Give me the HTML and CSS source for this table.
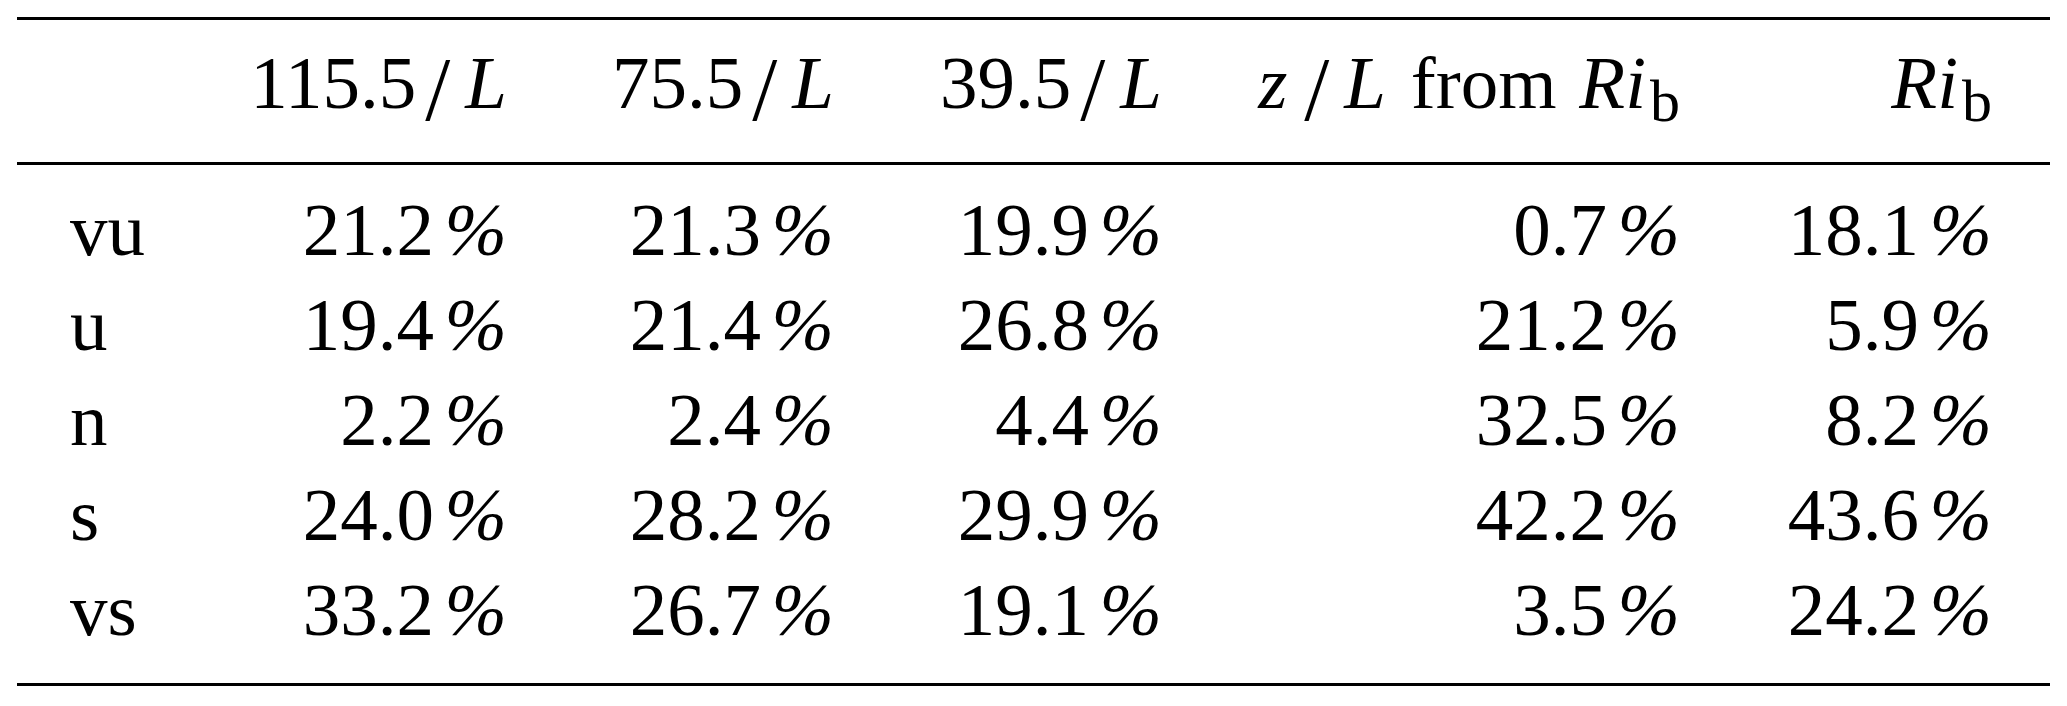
FILE: index.html
```html
<!DOCTYPE html>
<html lang="en">
<head>
<meta charset="utf-8">
<title>Stability classes</title>
<link rel="stylesheet" href="styles.css">
</head>
<body>
<table class="tbl">
  <colgroup>
    <col class="c-stub">
    <col class="c1">
    <col class="c2">
    <col class="c3">
    <col class="c4">
    <col class="c5">
  </colgroup>
  <thead>
    <tr>
      <th class="stub"></th>
      <th>115.5<span class="sl">/</span><i class="m">L</i></th>
      <th>75.5<span class="sl">/</span><i class="m">L</i></th>
      <th>39.5<span class="sl">/</span><i class="m">L</i></th>
      <th><i class="m z">z</i><span class="sl">/</span><i class="m lw">L</i> from <i class="m ri">Ri</i><span class="sub">b</span></th>
      <th class="last"><i class="m">Ri</i><span class="sub">b</span></th>
    </tr>
  </thead>
  <tbody>
    <tr class="first">
      <td class="stub">vu</td>
      <td>21.2<span class="u">%</span></td>
      <td>21.3<span class="u">%</span></td>
      <td>19.9<span class="u">%</span></td>
      <td>0.7<span class="u">%</span></td>
      <td class="last">18.1<span class="u">%</span></td>
    </tr>
    <tr>
      <td class="stub">u</td>
      <td>19.4<span class="u">%</span></td>
      <td>21.4<span class="u">%</span></td>
      <td>26.8<span class="u">%</span></td>
      <td>21.2<span class="u">%</span></td>
      <td class="last">5.9<span class="u">%</span></td>
    </tr>
    <tr>
      <td class="stub">n</td>
      <td>2.2<span class="u">%</span></td>
      <td>2.4<span class="u">%</span></td>
      <td>4.4<span class="u">%</span></td>
      <td>32.5<span class="u">%</span></td>
      <td class="last">8.2<span class="u">%</span></td>
    </tr>
    <tr>
      <td class="stub">s</td>
      <td>24.0<span class="u">%</span></td>
      <td>28.2<span class="u">%</span></td>
      <td>29.9<span class="u">%</span></td>
      <td>42.2<span class="u">%</span></td>
      <td class="last">43.6<span class="u">%</span></td>
    </tr>
    <tr class="end">
      <td class="stub">vs</td>
      <td>33.2<span class="u">%</span></td>
      <td>26.7<span class="u">%</span></td>
      <td>19.1<span class="u">%</span></td>
      <td>3.5<span class="u">%</span></td>
      <td class="last">24.2<span class="u">%</span></td>
    </tr>
  </tbody>
</table>
</body>
</html>
```

FILE: styles.css
```css
html, body {
  margin: 0;
  padding: 0;
  background: #ffffff;
}

body {
  padding-top: 17px;
  padding-left: 17px;
  font-family: "Liberation Serif", "Times New Roman", serif;
  color: #000000;
}

.tbl {
  width: 2033px;
  table-layout: fixed;
  border-collapse: separate;
  border-spacing: 0;
  font-size: 75px;
  line-height: 95px;
}

.c-stub { width: 223px; }
.c1 { width: 267px; }
.c2 { width: 327px; }
.c3 { width: 328px; }
.c4 { width: 518px; }
.c5 { width: 370px; }

.tbl th,
.tbl td {
  padding: 0;
  text-align: right;
  font-weight: normal;
  white-space: nowrap;
  vertical-align: baseline;
}

.tbl th {
  border-top: 3px solid #000;
  border-bottom: 3px solid #000;
  padding-top: 15px;
  padding-bottom: 32px;
}

.tbl .stub {
  text-align: left;
  padding-left: 53px;
}

.tbl .last {
  padding-right: 58px;
}

.tbl tr.first td {
  padding-top: 17px;
}

.tbl tr.end td {
  padding-bottom: 26px;
  border-bottom: 3px solid #000;
}

.m {
  font-style: italic;
}

.z {
  margin-right: 8px;
}

.lw {
  margin-right: 6px;
}

.ri {
  margin-left: 4px;
}

.sl {
  font-size: 1.2em;
  line-height: 0;
  position: relative;
  top: 0.13em;
  padding: 0 15px 0 9px;
}

.sub {
  font-size: 0.8em;
  position: relative;
  top: 0.22em;
  line-height: 0;
  margin-left: 4px;
}

.u {
  margin-left: 0.14em;
  font-style: italic;
}
```
